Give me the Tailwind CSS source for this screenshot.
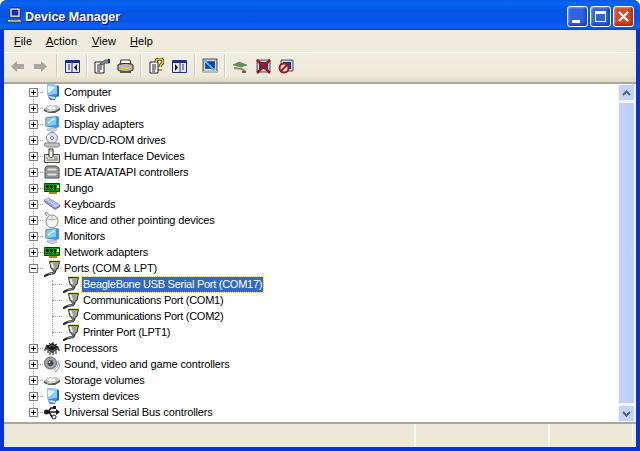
<!DOCTYPE html>
<html lang="en">
<head>
  <meta charset="UTF-8" />
  <title>Device Manager</title>
  <script src="https://cdn.jsdelivr.net/npm/@tailwindcss/browser@4"></script>
</head>
<body class="w-[640px] h-[451px] overflow-hidden bg-white font-['Liberation_Sans',sans-serif] text-[11px] text-black">
  <svg width="0" height="0" class="absolute">
    <defs>
      <symbol id="plus" viewBox="0 0 7 7"><path d="M1 3.500h5M3.500 1v5" stroke="#000"/></symbol>
      <symbol id="minus" viewBox="0 0 7 7"><path d="M1 3.500h5" stroke="#000"/></symbol>
      <symbol id="pc" viewBox="0 0 16 16"><path d="M3 0l10 1 2 1v10l-3 1-1 3H6L4 13l1-1-2-1z" fill="#3f7fd8"/><path d="M3 0l10 1v9L3 11z" fill="#8cc8f8"/><path d="M4 2l7 1-6 6-1-1z" fill="#e4f4ff"/><path d="M5 12l6 1v2l-5-1z" fill="#dcecff"/><path d="M13 2l2 1v9l-2 1z" fill="#2a62c4"/></symbol>
      <symbol id="mon" viewBox="0 0 16 16"><path d="M2 1l11-1 2 1v10l-3 1-9-1z" fill="#4f8fe0"/><path d="M3 2l9-1v8l-9 1z" fill="#78d0f0"/><path d="M4 6l6-4 1 1-7 5z" fill="#e8f8ff"/><path d="M3 13l9-1 1 2-4 2-6-2z" fill="#c8d4e4" stroke="#8090a8" stroke-width=".5"/><path d="M1 2l2-1v10l-2-1z" fill="#a0a8b8"/></symbol>
      <symbol id="disk" viewBox="0 0 16 16"><path d="M0 9l6-4h6l4 3v2l-5 3H5l-5-2z" fill="#55595a"/><path d="M0 9l6-4h6l4 3-5 3H5z" fill="#c9ccc8"/><ellipse cx="7.500" cy="8" rx="4" ry="1.700" fill="#f2f2ee"/><path d="M3 11h5" stroke="#e8e8e0"/></symbol>
      <symbol id="dvd" viewBox="0 0 16 16"><circle cx="8" cy="6" r="5.500" fill="#dcdcf0" stroke="#8a8aa8"/><path d="M4 3l3 2-1 3-3-2z" fill="#f6f6ff"/><circle cx="8" cy="6" r="1.500" fill="#fff" stroke="#777"/><path d="M1 11h14l1 2-2 2H3l-3-2z" fill="#c4c4bc" stroke="#707070" stroke-width=".8"/></symbol>
      <symbol id="hid" viewBox="0 0 16 16"><path d="M.5 6.500h15v8H.5z" fill="#e4e0d0" stroke="#4a4a44"/><path d="M5 1h4v7c0 2-4 2-4 0z" fill="#fff" stroke="#222"/><path d="M10 9h4M10 11h4M3 12h11M2 10h2" stroke="#777"/><path d="M6 3l2 0" stroke="#888"/></symbol>
      <symbol id="ide" viewBox="0 0 16 16"><path d="M3 2h9l3 2v10H1V4z" fill="#a8ada8" stroke="#444"/><path d="M3 4h10v3H3zM3 9h10v3H3z" fill="#e4e6e2" stroke="#6a6a6a" stroke-width=".7"/></symbol>
      <symbol id="card" viewBox="0 0 16 16"><path d="M.5 3.500h15v8H.5z" fill="#18a018" stroke="#0b400b"/><path d="M2 5h3v3H2zM6 5h3v3H6zM10 5h2v5h-2zM2 9h7v1H2z" fill="#063006"/><path d="M13 5h2v3h-2z" fill="#e8e8a0"/><path d="M5 12h8v2H5z" fill="#a88a20"/></symbol>
      <symbol id="kbd" viewBox="0 0 16 16"><path d="M0 4l5-2 11 7-5 3z" fill="#c8ccf0" stroke="#8488c0" stroke-width=".7"/><path d="M3 5l7 5M5 4l7 5M7 4l6 4" stroke="#8a8ec8" stroke-dasharray="1 1"/><path d="M0 4v2l11 8 5-3V9l-5 3z" fill="#7c80b4"/></symbol>
      <symbol id="mouse" viewBox="0 0 16 18"><ellipse cx="8" cy="10.500" rx="6" ry="6.500" fill="#f4f4f0" stroke="#8a8a88"/><path d="M3 8l5 1 5-1M8 4v5" stroke="#b0b0a8" fill="none"/><path d="M3 5L1 2c1-1 3 0 4 2" stroke="#777" fill="none"/></symbol>
      <symbol id="port" viewBox="0 0 16 18"><path d="M5 1.500h11" stroke="#e8d820" stroke-dasharray="1 1"/><path d="M5.500 2.500h10l-1.500 7h-1.500l-.5 2.500H9l-.5-2.500H7z" fill="#9ea29a" stroke="#333"/><path d="M7.500 4l1.500 5" stroke="#f2f2f2" stroke-width="2"/><path d="M11 12c0 3-3 2-6 3s-3 1-5 2.500" stroke="#222" stroke-width="2.200" fill="none"/><path d="M10.500 12.500c0 2-3 1.500-6 2.500" stroke="#aaa" fill="none"/></symbol>
      <symbol id="cpu" viewBox="0 0 16 16"><path d="M1 7l7-4 7 4-7 4z" fill="#1a1a1a"/><path d="M1 7v2l7 4 7-4V7l-7 4z" fill="#444"/><path d="M1 9v2M4 11v2M6 12v3M9 12v3M12 11v3M15 9v2M2 5l2 1M5 3l2 2M9 2l0 2M13 4l-2 1" stroke="#111"/><path d="M5 7l3-2 3 2" stroke="#666" fill="none"/></symbol>
      <symbol id="sound" viewBox="0 0 16 18"><circle cx="6.500" cy="8" r="6" fill="#a4a4a8" stroke="#60606a"/><circle cx="6.500" cy="8" r="3" fill="#4a4a50"/><circle cx="5.500" cy="7" r="1" fill="#ddd"/><path d="M14 6c1 4-1 7-4 9M16 8c0 4-2 7-5 9" stroke="#7088d8" fill="none"/></symbol>
      <symbol id="usb" viewBox="0 0 16 18"><path d="M2 9h11" stroke="#1a1a1a" stroke-width="1.500"/><path d="M12 6l4 3-4 3z" fill="#1a1a1a"/><circle cx="2.500" cy="9" r="2.500" fill="#1a1a1a"/><path d="M4 9l3-4h3M5 9l3 5h1" stroke="#1a1a1a" fill="none" stroke-width="1.500"/><path d="M9 3h3v3H9z" fill="#1a1a1a"/><circle cx="10" cy="14" r="2" fill="#fff" stroke="#1a1a1a"/></symbol>
      <symbol id="scr" viewBox="0 0 15 15"><path d="M1 1h13v12H1z" fill="#c8ccd8" stroke="#555"/><path d="M3 3h9v7H3z" fill="#1a3f9a"/></symbol>
    </defs>
  </svg>

  <div class="h-[451px] flex flex-col bg-[#0831d9] rounded-t-[7px] overflow-hidden">
    <!-- title bar -->
    <div class="h-[30px] shrink-0 flex items-center pt-[5px] pl-[6px] pr-[6px] bg-[linear-gradient(180deg,#0a5be0_0%,#0666f4_12%,#0455e4_35%,#0355e8_70%,#0a64f0_90%,#0343c8_100%)]">
      <svg width="17" height="17" viewBox="0 0 18 18" class="-mt-[4px]"><path d="M4 1h11v10H4z" fill="#dce0e8" stroke="#333"/><path d="M6 3h7v6H6z" fill="#1432b8"/><path d="M2 13h13l2 3H1z" fill="#e8e8e0" stroke="#333"/><path d="M4 14h9" stroke="#777"/></svg>
      <span class="ml-[2px] font-bold text-[12.500px] text-white [text-shadow:1px_1px_0_#0f1089]">Device Manager</span>
      <div class="ml-auto flex gap-[2px] -mt-[3px]">
        <div class="w-[21px] h-[21px] rounded-[3px] border border-white bg-[#2f62e2] shadow-[inset_-2px_-2px_3px_#1a3fb8,inset_1px_1px_2px_#7fa0f0] flex items-end pl-[4px] pb-[3px]"><div class="w-[8px] h-[3px] bg-white"></div></div>
        <div class="w-[21px] h-[21px] rounded-[3px] border border-white bg-[#2f62e2] shadow-[inset_-2px_-2px_3px_#1a3fb8,inset_1px_1px_2px_#7fa0f0] flex items-center justify-center"><div class="w-[11px] h-[11px] border border-white border-t-[3px]"></div></div>
        <div class="w-[21px] h-[21px] rounded-[3px] border border-white bg-[#d4492a] shadow-[inset_-2px_-2px_3px_#a82c10,inset_1px_1px_2px_#f09070] flex items-center justify-center">
          <svg width="11" height="11" viewBox="0 0 11 11"><path d="M1 1l9 9M10 1l-9 9" stroke="#fff" stroke-width="2.200"/></svg>
        </div>
      </div>
    </div>

    <div class="flex-1 mx-[4px] bg-[#ece9d8] flex flex-col min-h-0">
      <!-- menu bar -->
      <div class="h-[23px] shrink-0 flex items-center border-b border-b-[#fbfaf5] bg-[#efecdd] pl-[10px] text-[11px] tracking-[0.1px]">
        <span class="w-[32px]"><u>F</u>ile</span>
        <span class="w-[46px]"><u>A</u>ction</span>
        <span class="w-[38px]"><u>V</u>iew</span>
        <span><u>H</u>elp</span>
      </div>
      <!-- toolbar -->
      <div class="h-[31px] shrink-0 flex items-center pl-[7px] pb-[3px] border-b-2 border-b-[#aca899] bg-[linear-gradient(180deg,#f0eee0_0%,#eeebdc_75%,#dedbc8_100%)]">
        <svg width="13" height="11" viewBox="0 0 13 11"><path d="M0 5.500L6 0v3h7v5H6v3z" fill="#a8a89c"/></svg>
        <svg width="13" height="11" viewBox="0 0 13 11" class="ml-[10px]"><path d="M13 5.500L7 0v3H0v5h7v3z" fill="#a8a89c"/></svg>
        <div class="ml-[9px] w-[2px] h-[22px] bg-[#cfccb8] border-r border-r-white"></div>
        <svg width="15" height="13" viewBox="0 0 15 13" class="ml-[7px]"><path d="M.5.500h14v12H.5z" fill="#e8e8f0" stroke="#1a2f8a"/><path d="M1 1h14v2H1z" fill="#1a2f8a"/><path d="M3 5h2M3 7h2M3 9h2M7 3v9" stroke="#1a2f8a" fill="none"/><path d="M12 4v7L9 7.500z" fill="#111"/></svg>
        <div class="ml-[6px] w-[2px] h-[22px] bg-[#cfccb8] border-r border-r-white"></div>
        <svg width="16" height="15" viewBox="0 0 16 15" class="ml-[6px]"><path d="M1 3h9v11H1z" fill="#fff" stroke="#222"/><path d="M3 6h5M3 8h5M3 10h5M3 12h3" stroke="#222"/><path d="M6 5l5-4h4v3h-4l-3 2z" fill="#8a90a0" stroke="#555"/><path d="M14 0h2v4h-2z" fill="#1a2f8a"/></svg>
        <svg width="17" height="15" viewBox="0 0 17 15" class="ml-[7px]"><path d="M4 1h9l1 4H3z" fill="#fff" stroke="#333"/><path d="M1 6c3-2 12-2 15 0v5c-3 2-12 2-15 0z" fill="#b8b8b0" stroke="#222"/><path d="M5 9h7" stroke="#e8c820" stroke-width="2"/><path d="M3 12h11v2H3z" fill="#555"/></svg>
        <div class="ml-[6px] w-[2px] h-[22px] bg-[#cfccb8] border-r border-r-white"></div>
        <svg width="15" height="16" viewBox="0 0 15 16" class="ml-[7px]"><path d="M1 4h8v11H1z" fill="#fff" stroke="#222"/><path d="M3 7h4M3 9h4M3 11h4M3 13h3" stroke="#222"/><path d="M7 4c0-4 7-4 7 0 0 2-3 2-3 5M11 11v2" stroke="#222" stroke-width="3" fill="none"/><path d="M7 4c0-4 7-4 7 0 0 2-3 2-3 5M11 11v2" stroke="#f8d820" stroke-width="1.500" fill="none"/></svg>
        <svg width="15" height="13" viewBox="0 0 15 13" class="ml-[8px]"><path d="M.5.500h14v12H.5z" fill="#e8e8f0" stroke="#1a2f8a"/><path d="M1 1h14v2H1z" fill="#1a2f8a"/><path d="M8 3v9M10 5h2M10 7h2M10 9h2" stroke="#1a2f8a" fill="none"/><path d="M3 4v7l3-3.500z" fill="#111"/></svg>
        <div class="ml-[7px] w-[2px] h-[22px] bg-[#cfccb8] border-r border-r-white"></div>
        <svg width="16" height="16" viewBox="0 0 16 16" class="ml-[6px]"><use href="#scr"/><path d="M3 3l3 3 6 6" stroke="#30c0d8" stroke-width="2"/><path d="M2 2h3v3H2z" fill="#50d0e8"/><path d="M1 13h14v2H1z" fill="#b8b8b0"/></svg>
        <div class="ml-[6px] w-[2px] h-[22px] bg-[#cfccb8] border-r border-r-white"></div>
        <svg width="16" height="14" viewBox="0 0 16 14" class="ml-[6px]"><path d="M1 6l6-3 8 3-6 2z" fill="#5a9a50" stroke="#555" stroke-width=".5"/><path d="M2 9l8 1 4 3" stroke="#8a8a80" stroke-width="2" fill="none"/><path d="M10 12h4v2h-4z" fill="#7a5a30"/></svg>
        <svg width="15" height="15" viewBox="0 0 15 15" class="ml-[8px]"><use href="#scr"/><path d="M1 1l13 13M14 1L1 14" stroke="#a01818" stroke-width="2.500"/></svg>
        <svg width="16" height="15" viewBox="0 0 16 15" class="ml-[7px]"><path d="M3 1h12v11H3z" fill="#c8ccd8" stroke="#555"/><path d="M5 3h8v7H5z" fill="#1a3f9a"/><circle cx="6" cy="9" r="4.500" fill="#e8e8e8" stroke="#a01818" stroke-width="2"/><path d="M3 12l6-6" stroke="#a01818" stroke-width="2"/></svg>
      </div>

      <!-- tree + scrollbar -->
      <div class="h-[338px] shrink-0 flex bg-white pl-[1px] pr-[1px] relative">
        <div class="absolute left-[29px] top-[8px] h-[320px] border-l border-dotted border-l-[#a0a0a0]"></div>
        <div class="absolute left-[48px] top-[196px] h-[56px] border-l border-dotted border-l-[#a0a0a0]"></div>
        <ul class="flex-1 relative tracking-[-0.13px]">
          <li class="h-4 flex items-center"><span class="ml-[24px] w-[9px] h-[9px] border border-[#808080] bg-white"><svg width="7" height="7"><use href="#plus"/></svg></span><span class="w-[5px] border-t border-dotted border-t-[#a0a0a0]"></span><svg width="16" height="16" class="ml-[1px] shrink-0"><use href="#pc"/></svg><span class="ml-[4px]">Computer</span></li>
          <li class="h-4 flex items-center"><span class="ml-[24px] w-[9px] h-[9px] border border-[#808080] bg-white"><svg width="7" height="7"><use href="#plus"/></svg></span><span class="w-[5px] border-t border-dotted border-t-[#a0a0a0]"></span><svg width="16" height="16" class="ml-[1px] shrink-0"><use href="#disk"/></svg><span class="ml-[4px]">Disk drives</span></li>
          <li class="h-4 flex items-center"><span class="ml-[24px] w-[9px] h-[9px] border border-[#808080] bg-white"><svg width="7" height="7"><use href="#plus"/></svg></span><span class="w-[5px] border-t border-dotted border-t-[#a0a0a0]"></span><svg width="16" height="16" class="ml-[1px] shrink-0"><use href="#mon"/></svg><span class="ml-[4px]">Display adapters</span></li>
          <li class="h-4 flex items-center"><span class="ml-[24px] w-[9px] h-[9px] border border-[#808080] bg-white"><svg width="7" height="7"><use href="#plus"/></svg></span><span class="w-[5px] border-t border-dotted border-t-[#a0a0a0]"></span><svg width="16" height="16" class="ml-[1px] shrink-0"><use href="#dvd"/></svg><span class="ml-[4px]">DVD/CD-ROM drives</span></li>
          <li class="h-4 flex items-center"><span class="ml-[24px] w-[9px] h-[9px] border border-[#808080] bg-white"><svg width="7" height="7"><use href="#plus"/></svg></span><span class="w-[5px] border-t border-dotted border-t-[#a0a0a0]"></span><svg width="16" height="16" class="ml-[1px] shrink-0"><use href="#hid"/></svg><span class="ml-[4px]">Human Interface Devices</span></li>
          <li class="h-4 flex items-center"><span class="ml-[24px] w-[9px] h-[9px] border border-[#808080] bg-white"><svg width="7" height="7"><use href="#plus"/></svg></span><span class="w-[5px] border-t border-dotted border-t-[#a0a0a0]"></span><svg width="16" height="16" class="ml-[1px] shrink-0"><use href="#ide"/></svg><span class="ml-[4px]">IDE ATA/ATAPI controllers</span></li>
          <li class="h-4 flex items-center"><span class="ml-[24px] w-[9px] h-[9px] border border-[#808080] bg-white"><svg width="7" height="7"><use href="#plus"/></svg></span><span class="w-[5px] border-t border-dotted border-t-[#a0a0a0]"></span><svg width="16" height="16" class="ml-[1px] shrink-0"><use href="#card"/></svg><span class="ml-[4px]">Jungo</span></li>
          <li class="h-4 flex items-center"><span class="ml-[24px] w-[9px] h-[9px] border border-[#808080] bg-white"><svg width="7" height="7"><use href="#plus"/></svg></span><span class="w-[5px] border-t border-dotted border-t-[#a0a0a0]"></span><svg width="16" height="16" class="ml-[1px] shrink-0"><use href="#kbd"/></svg><span class="ml-[4px]">Keyboards</span></li>
          <li class="h-4 flex items-center"><span class="ml-[24px] w-[9px] h-[9px] border border-[#808080] bg-white"><svg width="7" height="7"><use href="#plus"/></svg></span><span class="w-[5px] border-t border-dotted border-t-[#a0a0a0]"></span><svg width="16" height="18" class="ml-[1px] shrink-0"><use href="#mouse"/></svg><span class="ml-[4px]">Mice and other pointing devices</span></li>
          <li class="h-4 flex items-center"><span class="ml-[24px] w-[9px] h-[9px] border border-[#808080] bg-white"><svg width="7" height="7"><use href="#plus"/></svg></span><span class="w-[5px] border-t border-dotted border-t-[#a0a0a0]"></span><svg width="16" height="16" class="ml-[1px] shrink-0"><use href="#mon"/></svg><span class="ml-[4px]">Monitors</span></li>
          <li class="h-4 flex items-center"><span class="ml-[24px] w-[9px] h-[9px] border border-[#808080] bg-white"><svg width="7" height="7"><use href="#plus"/></svg></span><span class="w-[5px] border-t border-dotted border-t-[#a0a0a0]"></span><svg width="16" height="16" class="ml-[1px] shrink-0"><use href="#card"/></svg><span class="ml-[4px]">Network adapters</span></li>
          <li class="h-4 flex items-center"><span class="ml-[24px] w-[9px] h-[9px] border border-[#808080] bg-white"><svg width="7" height="7"><use href="#minus"/></svg></span><span class="w-[5px] border-t border-dotted border-t-[#a0a0a0]"></span><svg width="16" height="18" class="ml-[1px] shrink-0"><use href="#port"/></svg><span class="ml-[4px]">Ports (COM &amp; LPT)</span></li>
          <li class="h-4 flex items-center tracking-[-0.27px]"><span class="ml-[47px] w-[10px] border-t border-dotted border-t-[#a0a0a0]"></span><svg width="16" height="18" class="ml-[1px] shrink-0"><use href="#port"/></svg><span class="ml-[3px] px-[1px] bg-[#316ac5] text-white outline-1 outline-dotted outline-[#e8c030] leading-[15px]">BeagleBone USB Serial Port (COM17)</span></li>
          <li class="h-4 flex items-center tracking-[-0.27px]"><span class="ml-[47px] w-[10px] border-t border-dotted border-t-[#a0a0a0]"></span><svg width="16" height="18" class="ml-[1px] shrink-0"><use href="#port"/></svg><span class="ml-[4px]">Communications Port (COM1)</span></li>
          <li class="h-4 flex items-center tracking-[-0.27px]"><span class="ml-[47px] w-[10px] border-t border-dotted border-t-[#a0a0a0]"></span><svg width="16" height="18" class="ml-[1px] shrink-0"><use href="#port"/></svg><span class="ml-[4px]">Communications Port (COM2)</span></li>
          <li class="h-4 flex items-center tracking-[-0.27px]"><span class="ml-[47px] w-[10px] border-t border-dotted border-t-[#a0a0a0]"></span><svg width="16" height="18" class="ml-[1px] shrink-0"><use href="#port"/></svg><span class="ml-[4px]">Printer Port (LPT1)</span></li>
          <li class="h-4 flex items-center"><span class="ml-[24px] w-[9px] h-[9px] border border-[#808080] bg-white"><svg width="7" height="7"><use href="#plus"/></svg></span><span class="w-[5px] border-t border-dotted border-t-[#a0a0a0]"></span><svg width="16" height="16" class="ml-[1px] shrink-0"><use href="#cpu"/></svg><span class="ml-[4px]">Processors</span></li>
          <li class="h-4 flex items-center"><span class="ml-[24px] w-[9px] h-[9px] border border-[#808080] bg-white"><svg width="7" height="7"><use href="#plus"/></svg></span><span class="w-[5px] border-t border-dotted border-t-[#a0a0a0]"></span><svg width="16" height="18" class="ml-[1px] shrink-0"><use href="#sound"/></svg><span class="ml-[4px]">Sound, video and game controllers</span></li>
          <li class="h-4 flex items-center"><span class="ml-[24px] w-[9px] h-[9px] border border-[#808080] bg-white"><svg width="7" height="7"><use href="#plus"/></svg></span><span class="w-[5px] border-t border-dotted border-t-[#a0a0a0]"></span><svg width="16" height="16" class="ml-[1px] shrink-0"><use href="#disk"/></svg><span class="ml-[4px]">Storage volumes</span></li>
          <li class="h-4 flex items-center"><span class="ml-[24px] w-[9px] h-[9px] border border-[#808080] bg-white"><svg width="7" height="7"><use href="#plus"/></svg></span><span class="w-[5px] border-t border-dotted border-t-[#a0a0a0]"></span><svg width="16" height="16" class="ml-[1px] shrink-0"><use href="#pc"/></svg><span class="ml-[4px]">System devices</span></li>
          <li class="h-4 flex items-center"><span class="ml-[24px] w-[9px] h-[9px] border border-[#808080] bg-white"><svg width="7" height="7"><use href="#plus"/></svg></span><span class="w-[5px] border-t border-dotted border-t-[#a0a0a0]"></span><svg width="16" height="18" class="ml-[1px] shrink-0"><use href="#usb"/></svg><span class="ml-[4px]">Universal Serial Bus controllers</span></li>
        </ul>
        <!-- scrollbar -->
        <div class="w-[17px] shrink-0 bg-[#f6f5ee] flex flex-col gap-[1px]">
          <div class="h-[17px] rounded-[2px] border border-[#eef3ff] bg-[#c3d4f8] flex items-center justify-center"><svg width="9" height="6" viewBox="0 0 9 6"><path d="M1 5l3.500-3.500L8 5" stroke="#4d6185" stroke-width="2" fill="none"/></svg></div>
          <div class="flex-1 rounded-[2px] border border-[#eef3ff] bg-[linear-gradient(90deg,#c3d4fb,#bccffa)]"></div>
          <div class="h-[17px] rounded-[2px] border border-[#eef3ff] bg-[#c3d4f8] flex items-center justify-center"><svg width="9" height="6" viewBox="0 0 9 6"><path d="M1 1l3.500 3.500L8 1" stroke="#4d6185" stroke-width="2" fill="none"/></svg></div>
        </div>
      </div>

      <!-- status bar -->
      <div class="flex-1 flex border-t-2 border-t-[#aca899] bg-[#ece9d8]">
        <div class="w-[412px] border-r-2 border-r-[#fdfdf8]"></div>
        <div class="w-[134px] border-r-2 border-r-[#fdfdf8]"></div>
        <div class="w-[83px] border-r border-r-[#fdfdf8]"></div>
      </div>
    </div>
    <div class="h-[4px] shrink-0"></div>
  </div>
</body>
</html>
